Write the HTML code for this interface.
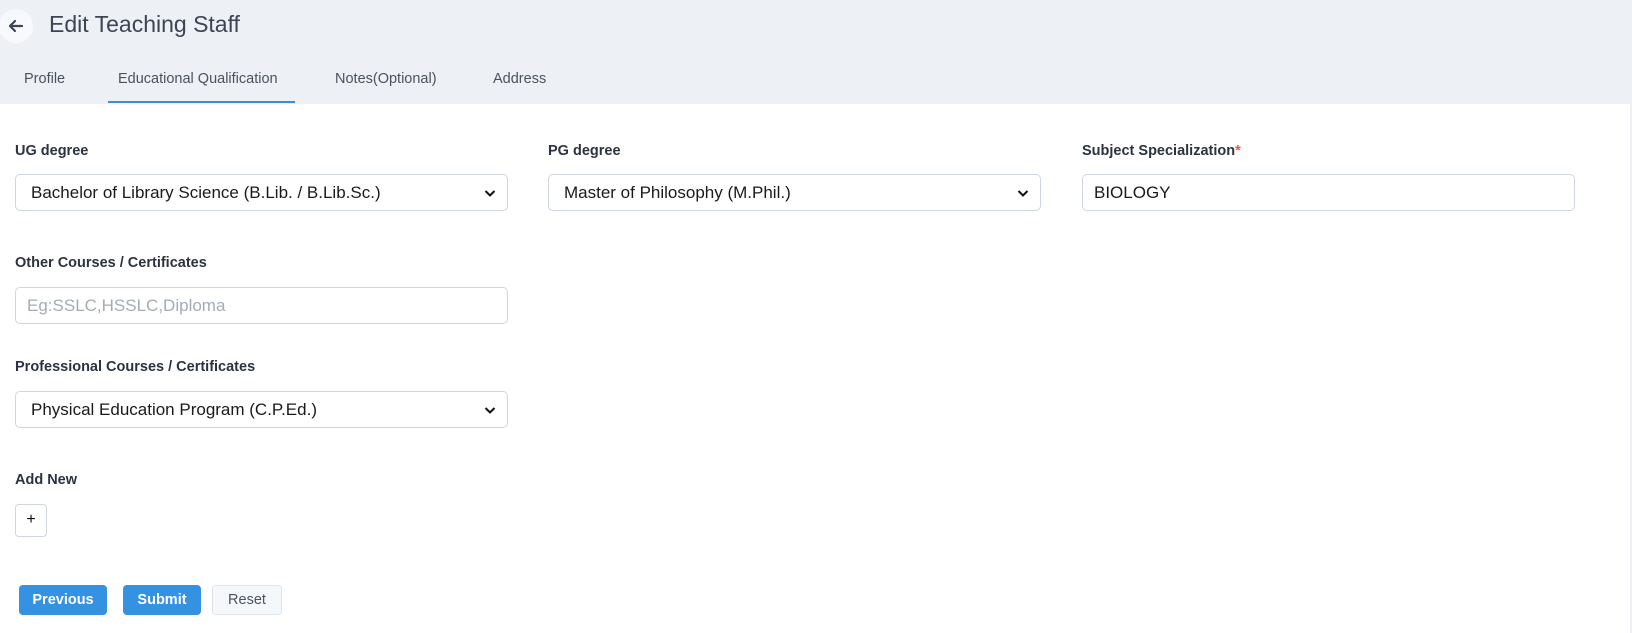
<!DOCTYPE html>
<html><head><style>
*{box-sizing:border-box;margin:0;padding:0}
body{width:1632px;height:633px;background:#edf1f5;font-family:"Liberation Sans",sans-serif;position:relative;overflow:hidden;color:#2b3340}
.abs{position:absolute}
.back{left:-1px;top:9px;width:34px;height:34px;border-radius:50%;background:#f7f9fc}
.title{left:49px;top:11px;font-size:23px;color:#3d4555}
.tab{top:71px;font-size:14.5px;color:#4a5260}
.card{left:0;top:104px;width:1630px;height:529px;background:#fff}
.lbl{font-size:14.5px;font-weight:bold;color:#2b3340}
.inp{height:37px;width:493px;border:1px solid #cfd6e0;border-radius:5px;background:#fff;font-size:17px;color:#1a1a1a;padding:0 15px;line-height:35px}
.chev{position:absolute;right:11px;top:14px}
.btn{top:585px;height:30px;border-radius:4px;font-size:14.5px;font-weight:bold;text-align:center;line-height:30px}
</style></head><body>
<div class="abs back"></div>
<svg class="abs" style="left:7px;top:17px" width="18" height="18" viewBox="0 0 18 18"><path d="M15 9H3M8 4L3 9l5 5" stroke="#3d4555" stroke-width="2.2" fill="none" stroke-linecap="round" stroke-linejoin="round"/></svg>
<div class="abs title">Edit Teaching Staff</div>
<div class="abs tab" style="left:24px">Profile</div>
<div class="abs tab" style="left:118px">Educational Qualification</div>
<div class="abs tab" style="left:335px">Notes(Optional)</div>
<div class="abs tab" style="left:493px">Address</div>
<div class="abs" style="left:108px;top:101px;width:187px;height:2px;background:#3a8fdd"></div>
<div class="abs card"></div>

<div class="abs lbl" style="left:15px;top:143px">UG degree</div>
<div class="abs inp" style="left:15px;top:174px">Bachelor of Library Science (B.Lib. / B.Lib.Sc.)<svg class="chev" width="12" height="9" viewBox="0 0 12 9"><path d="M1.5 2l4.5 4.5L10.5 2" stroke="#111" stroke-width="2" fill="none"/></svg></div>
<div class="abs lbl" style="left:548px;top:143px">PG degree</div>
<div class="abs inp" style="left:548px;top:174px">Master of Philosophy (M.Phil.)<svg class="chev" width="12" height="9" viewBox="0 0 12 9"><path d="M1.5 2l4.5 4.5L10.5 2" stroke="#111" stroke-width="2" fill="none"/></svg></div>
<div class="abs lbl" style="left:1082px;top:143px">Subject Specialization<span style="color:#e05555">*</span></div>
<div class="abs inp" style="left:1082px;top:174px;padding-left:11px">BIOLOGY</div>

<div class="abs lbl" style="left:15px;top:255px">Other Courses / Certificates</div>
<div class="abs inp" style="left:15px;top:287px;padding-left:11px;color:#a3acb8">Eg:SSLC,HSSLC,Diploma</div>

<div class="abs lbl" style="left:15px;top:359px">Professional Courses / Certificates</div>
<div class="abs inp" style="left:15px;top:391px">Physical Education Program (C.P.Ed.)<svg class="chev" width="12" height="9" viewBox="0 0 12 9"><path d="M1.5 2l4.5 4.5L10.5 2" stroke="#111" stroke-width="2" fill="none"/></svg></div>

<div class="abs lbl" style="left:15px;top:472px">Add New</div>
<div class="abs" style="left:15px;top:504px;width:32px;height:33px;border:1px solid #cfd6e0;border-radius:4px;text-align:center;line-height:30px;font-size:16px;color:#111">+</div>

<div class="abs btn" style="left:19px;width:88px;background:#3592e2;color:#fff">Previous</div>
<div class="abs btn" style="left:123px;width:78px;background:#3592e2;color:#fff">Submit</div>
<div class="abs btn" style="left:212px;width:70px;background:#f5f8fb;border:1px solid #dfe5ec;color:#4a5260;font-weight:normal;line-height:28px">Reset</div>
</body></html>
